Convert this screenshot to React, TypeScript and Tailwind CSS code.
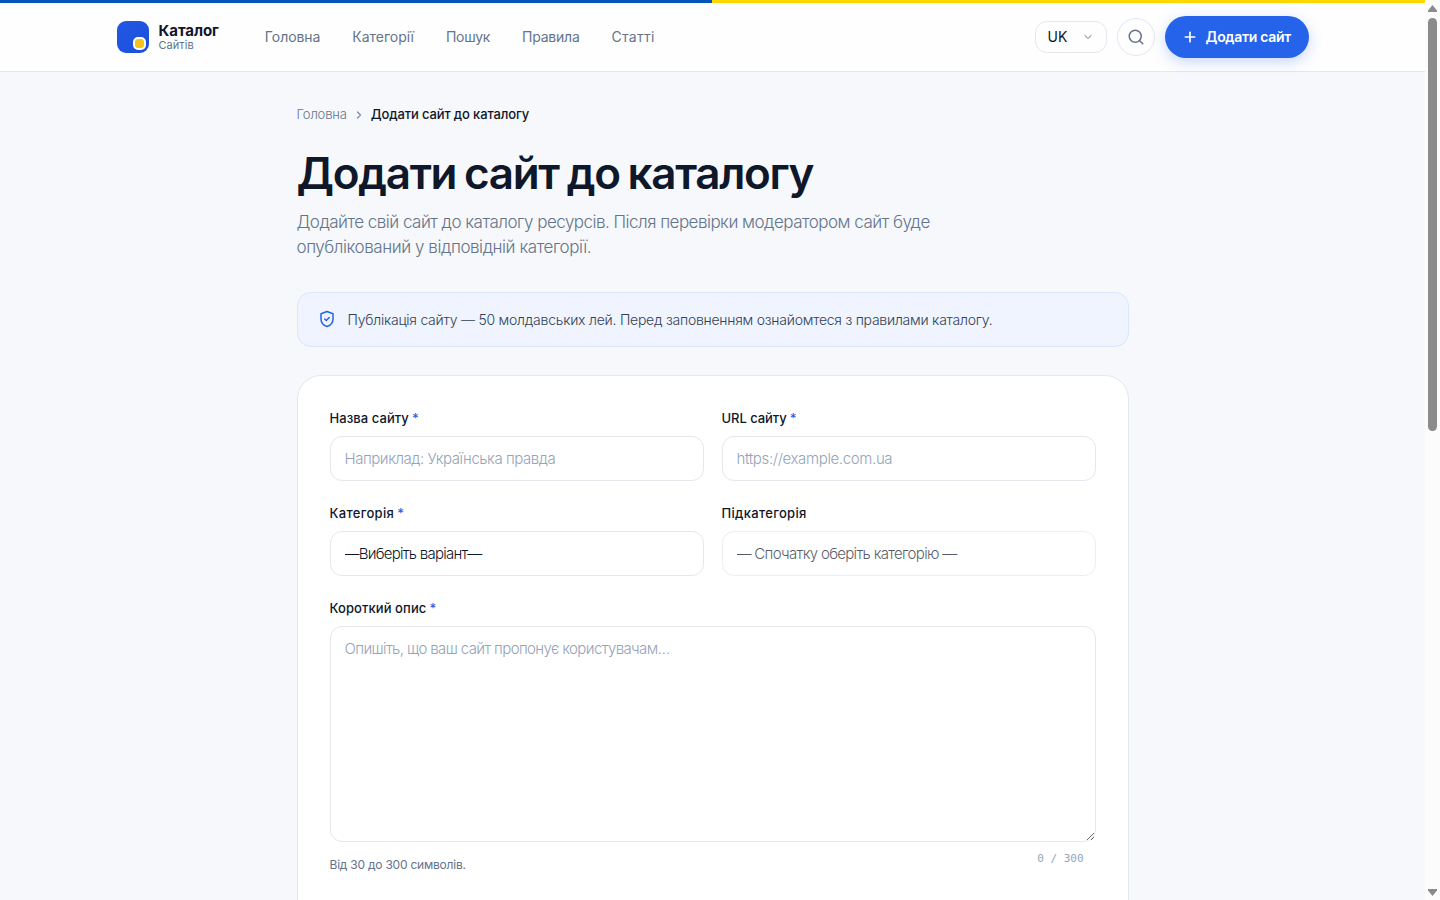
import React from 'react';
import { ChevronDown, ChevronRight, Plus, Search } from 'lucide-react';

interface FieldProps {
  label: string;
  labelClass?: string;
  required?: boolean;
  children: React.ReactNode;
}

const navItems = [
  { label: 'Головна', className: 'tracking-[-0.06px]' },
  { label: 'Категорії', className: 'tracking-[-0.03px]' },
  { label: 'Пошук', className: 'tracking-[-0.3px]' },
  { label: 'Правила', className: 'tracking-[-0.22px]' },
  { label: 'Статті', className: 'tracking-[0.25px]' },
];

const controlClass =
  'block w-full rounded-xl border border-[#e4e7ec] bg-white px-3.5 text-[15px] font-[350] text-[#0f172a] outline-none placeholder:text-[#94a3b8]';

function Logo() {
  return (
    <a href="#" className="flex items-center gap-2.5">
      <span className="flex h-8 w-8 items-end justify-end rounded-[9px] bg-linear-to-br from-[#2258e4] to-[#1d50dc] pr-[3px] pb-[3px]">
        <span className="h-[13px] w-[13px] rounded-[5px] border-2 border-white bg-[#f5c518]" />
      </span>
      <span className="flex flex-col">
        <span className="h-4 text-[15px] leading-4 font-bold tracking-[-0.05px] text-[#0f172a]">Каталог</span>
        <span className="h-3 text-[11px] leading-3 tracking-[0.05px] text-[#64748b]">Сайтів</span>
      </span>
    </a>
  );
}

function Header() {
  return (
    <header className="flex h-[69px] shrink-0 justify-center border-b border-[#e4e7ec] bg-[#fefefe]">
      <div className="flex w-[1192px] items-center justify-between">
        <div className="flex items-center gap-[46px]">
          <Logo />
          <nav className="flex gap-8 text-sm text-[#64748b]">
            {navItems.map((item) => (
              <a key={item.label} href="#" className={item.className}>
                {item.label}
              </a>
            ))}
          </nav>
        </div>
        <div className="flex items-center gap-2.5">
          <button className="flex h-8 w-[72px] items-center justify-between rounded-xl border border-[#e4e7ec] pr-3 pl-3 text-sm text-[#0f172a]">
            UK
            <ChevronDown className="h-3 w-3 text-[#64748b]" />
          </button>
          <button className="flex h-[38px] w-[38px] items-center justify-center rounded-full border border-[#e4e7ec] text-[#64748b]">
            <Search className="h-[18px] w-[18px]" />
          </button>
          <button className="flex h-[42px] w-36 items-center gap-2 rounded-full bg-[#2563eb] pl-[17px] text-sm font-semibold whitespace-nowrap text-white shadow-[0_4px_14px_rgba(37,99,235,0.25)]">
            <Plus className="h-4 w-4" strokeWidth={2.5} />
            <span className="tracking-[-0.3px]">Додати сайт</span>
          </button>
        </div>
      </div>
    </header>
  );
}

function Field({ label, labelClass, required, children }: FieldProps) {
  return (
    <div>
      <label className="mb-[7px] flex h-[21px] items-center gap-[3px] pt-px text-[13px] font-medium text-[#0f172a]">
        <span className={labelClass}>{label}</span>
        {required && <span className="text-[#2563eb]">*</span>}
      </label>
      {children}
    </div>
  );
}

function ScrollBar() {
  return (
    <div className="flex w-[15px] shrink-0 flex-col items-center bg-[#fcfcfc] text-[#8b8b8b]">
      <svg className="mt-[5px] h-[7px] w-[9px]" viewBox="0 0 9 7" fill="currentColor">
        <path d="M4.5 0 9 5.5V7H0V5.5z" />
      </svg>
      <div className="mt-1.5 h-[413px] w-[9px] rounded-full bg-[#8b8b8b]" />
      <svg className="mt-auto mb-[4px] h-[7px] w-[9px]" viewBox="0 0 9 7" fill="currentColor">
        <path d="M4.5 7 9 1.5V0H0v1.5z" />
      </svg>
    </div>
  );
}

export default function App() {
  return (
    <div className="flex h-screen overflow-hidden bg-[#f6f8fb] font-['Inter',sans-serif]">
      <div className="flex min-w-0 flex-1 flex-col">
        <div className="flex h-[3px] shrink-0">
          <div className="w-[712px] bg-[#0057b7]" />
          <div className="flex-1 bg-[#ffd700]" />
        </div>
        <Header />

        <main className="mx-auto w-[832px] pt-8">
          <nav className="flex h-[21px] items-center gap-1.5 pt-px text-[13px]">
            <a href="#" className="font-[350] tracking-[-0.15px] text-[#64748b]">
              Головна
            </a>
            <ChevronRight className="h-3 w-3 text-[#7f8ea3]" strokeWidth={2.5} />
            <span className="font-medium tracking-[-0.13px] text-[#0f172a]">Додати сайт до каталогу</span>
          </nav>

          <h1 className="mt-6 text-[44px] leading-12 font-semibold tracking-[-1.3px] whitespace-nowrap text-[#0f172a] [word-spacing:-2px]">
            Додати сайт до каталогу
          </h1>
          <p className="mt-[13px] text-[17px] leading-[25px] font-[350] whitespace-nowrap text-[#64748b]">
            <span className="tracking-[-0.52px]">Додайте свій сайт до каталогу ресурсів. Після перевірки модератором сайт буде</span>
            <br />
            <span className="tracking-[-0.44px]">опублікований у відповідній категорії.</span>
          </p>

          <div className="mt-8 flex h-[55px] items-center gap-3 rounded-[14px] border border-[#dce5fa] bg-[#eff4ff] px-5 text-sm font-[350] text-[#334155]">
            <svg
              className="-mt-0.5 h-[18px] w-[18px] text-[#2563eb]"
              viewBox="0 0 24 24"
              fill="none"
              stroke="currentColor"
              strokeWidth="2"
              strokeLinecap="round"
              strokeLinejoin="round"
            >
              <path d="M12 2 4 5v7c0 5.500 3.500 8.500 8 10 4.500-1.500 8-4.500 8-10V5z" />
              <path d="m9 12 2 2 4-4" />
            </svg>
            <span className="tracking-[-0.24px] whitespace-nowrap">
              Публікація сайту — 50 молдавських лей. Перед заповненням ознайомтеся з правилами каталогу.
            </span>
          </div>

          <form className="mt-7 h-[700px] rounded-3xl border border-[#e4e7ec] bg-white p-8">
            <div className="grid grid-cols-2 gap-x-[18px] gap-y-[22px]">
              <Field label="Назва сайту" labelClass="tracking-[0.07px]" required>
                <input className={`${controlClass} h-[45px] tracking-[-0.45px]`} placeholder="Наприклад: Українська правда" />
              </Field>
              <Field label="URL сайту" labelClass="tracking-[-0.05px]" required>
                <input className={`${controlClass} h-[45px] tracking-[-0.36px]`} placeholder="https://example.com.ua" />
              </Field>
              <Field label="Категорія" labelClass="tracking-[0.3px]" required>
                <select className={`${controlClass} h-[45px] appearance-none pt-0.5 tracking-[-0.75px]`}>
                  <option>—Виберіть варіант—</option>
                </select>
              </Field>
              <Field label="Підкатегорія" labelClass="tracking-[0.3px]">
                <select disabled className={`${controlClass} h-[45px] appearance-none pt-0.5 tracking-[-0.68px] opacity-70`}>
                  <option>— Спочатку оберіть категорію —</option>
                </select>
              </Field>
              <div className="col-span-2">
                <Field label="Короткий опис" labelClass="tracking-[0.08px]" required>
                  <textarea
                    className={`${controlClass} h-[216px] resize-y py-[11px] leading-[22px] tracking-[-0.62px]`}
                    placeholder="Опишіть, що ваш сайт пропонує користувачам…"
                  />
                </Field>
                <div className="flex justify-between pt-2 pr-3">
                  <span className="pt-1.5 text-xs leading-[18px] tracking-[-0.22px] text-[#64748b]">Від 30 до 300 символів.</span>
                  <span className="font-['DejaVu_Sans_Mono',monospace] text-[11px] leading-[17px] text-[#94a3b8]">0 / 300</span>
                </div>
              </div>
            </div>
          </form>
        </main>
      </div>
      <ScrollBar />
    </div>
  );
}
